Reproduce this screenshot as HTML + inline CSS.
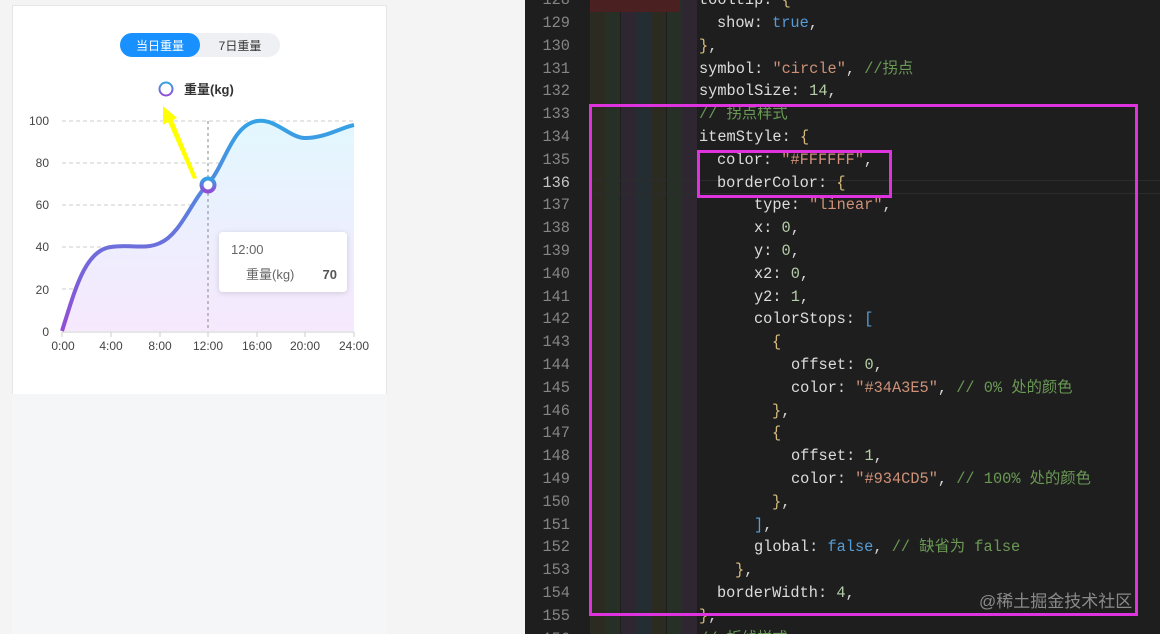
<!DOCTYPE html>
<html><head><meta charset="utf-8"><style>
*{margin:0;padding:0;box-sizing:border-box}
body{width:1160px;height:634px;overflow:hidden;background:#f4f4f5;position:relative;font-family:"Liberation Sans","Noto Sans CJK SC",sans-serif}
#left{position:absolute;left:12px;top:5px;width:375px;height:389px;background:#fff;border:1px solid #e6e6e6;border-bottom:none}
#leftbot{position:absolute;left:12px;top:394px;width:375px;height:240px;background:#f5f6f8}
#ed{position:absolute;left:525px;top:0;width:635px;height:634px;background:#1e1e1e;overflow:hidden}
.ln{position:absolute;width:45px;text-align:right;left:0;color:#858585;font:15.3px/20px "Liberation Mono",monospace;height:20px}
.c{position:absolute;font:15.3px/20px "Liberation Mono","Noto Sans CJK SC",monospace;color:#d4d4d4;white-space:pre;height:20px}
.k{color:#dcdcdc}.s{color:#ce9178}.n{color:#b5cea8}.cm{color:#6a9955}.b{color:#569cd6}.y{color:#d7ba7d}.p{color:#b48ead}
.band{position:absolute;top:0;height:634px;width:15px}
</style></head><body>
<div id="left"></div><div id="leftbot"></div>
<svg style="position:absolute;left:0;top:0" width="400" height="400">
<defs>
<linearGradient id="lg" x1="0" y1="0" x2="0" y2="1"><stop offset="0" stop-color="#34a3e5"/><stop offset="1" stop-color="#934cd5"/></linearGradient>
<linearGradient id="ag" x1="0" y1="0" x2="0" y2="1"><stop offset="0" stop-color="#e2f7fe"/><stop offset="1" stop-color="#f6e8fd"/></linearGradient>
<filter id="sh"><feDropShadow dx="0" dy="1" stdDeviation="3" flood-opacity="0.15"/></filter>
</defs>
<rect x="120" y="33" width="160" height="24" rx="12" fill="#eef0f3"/>
<rect x="120" y="33" width="80" height="24" rx="12" fill="#1890ff"/>
<text x="160" y="50" font-size="12" fill="#fff" text-anchor="middle">当日重量</text>
<text x="240" y="50" font-size="12" fill="#333" text-anchor="middle">7日重量</text>
<circle cx="166" cy="89" r="6.5" fill="#fff" stroke="url(#lg)" stroke-width="2"/>
<text x="184" y="94" font-size="13" font-weight="bold" fill="#333">重量(kg)</text>
<g stroke="#ccc" stroke-dasharray="4,3" stroke-width="1">
<line x1="62" y1="121" x2="354" y2="121"/><line x1="62" y1="163" x2="354" y2="163"/><line x1="62" y1="205" x2="354" y2="205"/><line x1="62" y1="247" x2="354" y2="247"/><line x1="62" y1="289" x2="354" y2="289"/></g>
<g font-size="12" fill="#444" text-anchor="end"><text x="49" y="125">100</text><text x="49" y="167">80</text><text x="49" y="209">60</text><text x="49" y="251">40</text><text x="49" y="294">20</text><text x="49" y="336">0</text></g>
<path d="M62,331 C75,290 85,250 111,247 C130,244 145,250 160,243 C180,235 192,200 208,184 C225,165 232,125 257,121 C275,118 290,138 305,138 C325,138 340,128 354,125 L354,331 Z" fill="url(#ag)"/>
<line x1="208" y1="121" x2="208" y2="331" stroke="#888" stroke-dasharray="3,3"/>
<path d="M62,331 C75,290 85,250 111,247 C130,244 145,250 160,243 C180,235 192,200 208,184 C225,165 232,125 257,121 C275,118 290,138 305,138 C325,138 340,128 354,125" fill="none" stroke="url(#lg)" stroke-width="4"/>
<line x1="62" y1="332" x2="354" y2="332" stroke="#ccc"/>
<g stroke="#ccc"><line x1="62" y1="332" x2="62" y2="337"/><line x1="111" y1="332" x2="111" y2="337"/><line x1="160" y1="332" x2="160" y2="337"/><line x1="208" y1="332" x2="208" y2="337"/><line x1="257" y1="332" x2="257" y2="337"/><line x1="305" y1="332" x2="305" y2="337"/><line x1="354" y1="332" x2="354" y2="337"/></g>
<g font-size="12" fill="#444" text-anchor="middle"><text x="63" y="350">0:00</text><text x="111" y="350">4:00</text><text x="160" y="350">8:00</text><text x="208" y="350">12:00</text><text x="257" y="350">16:00</text><text x="305" y="350">20:00</text><text x="354" y="350">24:00</text></g>
<circle cx="208" cy="185" r="6.5" fill="#fff" stroke="url(#lg)" stroke-width="4"/>
<polygon points="163,106 177,118 173,120 197,178 193,179 168,122 163,125" fill="#ffff00"/>
<rect x="219" y="232" width="128" height="60" rx="4" fill="#fff" filter="url(#sh)"/>
<text x="231" y="254" font-size="13" fill="#666">12:00</text>
<text x="246" y="279" font-size="13" fill="#666">重量(kg)</text>
<text x="337" y="279" font-size="13" fill="#555" font-weight="bold" text-anchor="end">70</text>
</svg>
<div id="ed">
<div class="band" style="left:65px;background:#2b2b22"></div>
<div class="band" style="left:80px;background:#263027"></div>
<div class="band" style="left:96px;background:#2e2631"></div>
<div class="band" style="left:111px;background:#242d31"></div>
<div class="band" style="left:126px;background:#2b2b22"></div>
<div class="band" style="left:142px;background:#263027"></div>
<div class="band" style="left:157px;background:#2e2631"></div>
<div style="position:absolute;left:65px;top:0;width:90px;height:12px;background:#4a2020"></div>
<div style="position:absolute;left:65px;top:180px;width:570px;height:14px;border-top:1px solid #2c2c2c;border-bottom:1px solid #2c2c2c"></div>
<div id="lines"></div>
<div style="position:absolute;left:64px;top:104px;width:549px;height:512px;border:3px solid #e033e0"></div>
<div style="position:absolute;left:172px;top:150px;width:195px;height:48px;border:3px solid #e033e0"></div>
<div class="c" style="left:454px;top:592px;color:#8a8a8a;font-family:'Liberation Sans','Noto Sans CJK SC',sans-serif;font-size:17px">@稀土掘金技术社区</div>
</div>
<script>
var L=[
[128,174,'<span class="k">tooltip</span>: <span class="y">{</span>'],
[129,192,'<span class="k">show</span>: <span class="b">true</span>,'],
[130,174,'<span class="y">}</span>,'],
[131,174,'<span class="k">symbol</span>: <span class="s">"circle"</span>, <span class="cm">//拐点</span>'],
[132,174,'<span class="k">symbolSize</span>: <span class="n">14</span>,'],
[133,174,'<span class="cm">// 拐点样式</span>'],
[134,174,'<span class="k">itemStyle</span>: <span class="y">{</span>'],
[135,192,'<span class="k">color</span>: <span class="s">"#FFFFFF"</span>,'],
[136,192,'<span class="k">borderColor</span>: <span class="y">{</span>'],
[137,229,'<span class="k">type</span>: <span class="s">"linear"</span>,'],
[138,229,'<span class="k">x</span>: <span class="n">0</span>,'],
[139,229,'<span class="k">y</span>: <span class="n">0</span>,'],
[140,229,'<span class="k">x2</span>: <span class="n">0</span>,'],
[141,229,'<span class="k">y2</span>: <span class="n">1</span>,'],
[142,229,'<span class="k">colorStops</span>: <span class="b">[</span>'],
[143,247,'<span class="y">{</span>'],
[144,266,'<span class="k">offset</span>: <span class="n">0</span>,'],
[145,266,'<span class="k">color</span>: <span class="s">"#34A3E5"</span>, <span class="cm">// 0% 处的颜色</span>'],
[146,247,'<span class="y">}</span>,'],
[147,247,'<span class="y">{</span>'],
[148,266,'<span class="k">offset</span>: <span class="n">1</span>,'],
[149,266,'<span class="k">color</span>: <span class="s">"#934CD5"</span>, <span class="cm">// 100% 处的颜色</span>'],
[150,247,'<span class="y">}</span>,'],
[151,229,'<span class="b">]</span>,'],
[152,229,'<span class="k">global</span>: <span class="b">false</span>, <span class="cm">// 缺省为 false</span>'],
[153,210,'<span class="y">}</span>,'],
[154,192,'<span class="k">borderWidth</span>: <span class="n">4</span>,'],
[155,174,'<span class="y">}</span>,'],
[156,174,'<span class="cm">// 折线样式</span>']];
var h='';L.forEach(function(a){var t=23+(a[0]-129)*22.8-10;
h+='<div class="ln" style="top:'+t+'px;'+(a[0]==136?'color:#c6c6c6':'')+'">'+a[0]+'</div><div class="c" style="left:'+a[1]+'px;top:'+t+'px">'+a[2]+'</div>';});
document.getElementById('lines').innerHTML=h;
</script>
</body></html>
